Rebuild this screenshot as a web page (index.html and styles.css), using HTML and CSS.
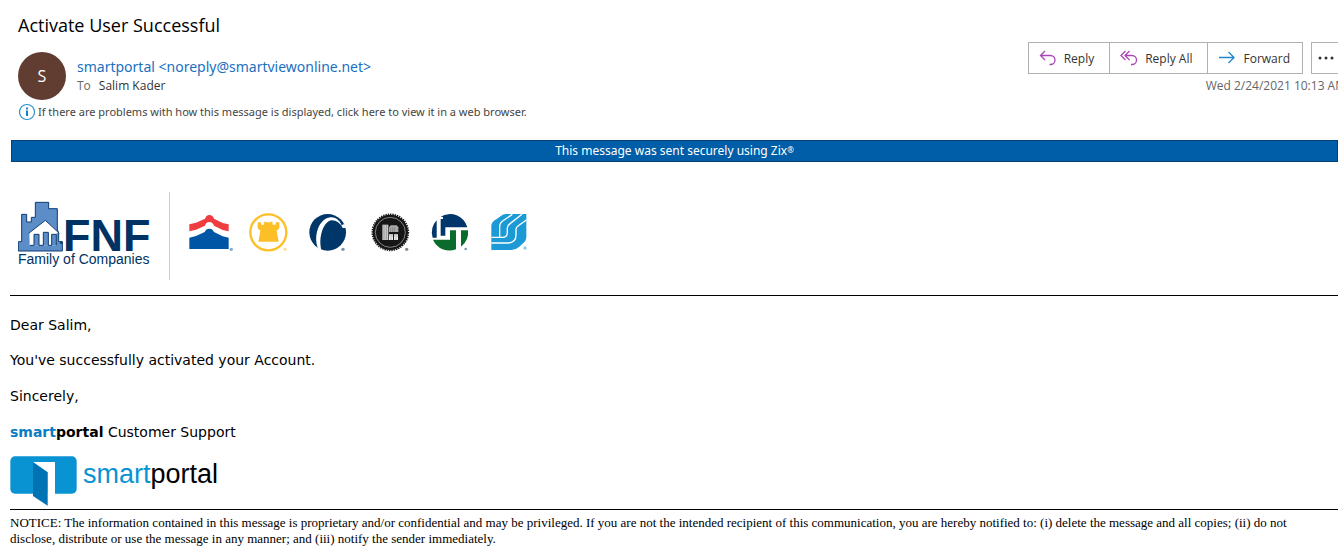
FILE: index.html
```html
<!DOCTYPE html>
<html lang="en">
<head>
    <meta charset="UTF-8">
    <meta name="viewport" content="width=device-width, initial-scale=1.0">
    <title>Activate User Successful</title>
    <link rel="stylesheet" href="styles.css">
</head>
<body>
    <header class="mail-header">
        <h1>Activate User Successful</h1>
        <div class="header-row">
            <div class="avatar">S</div>
            <div class="people">
                <div class="sender">smartportal &lt;noreply@smartviewonline.net&gt;</div>
                <div class="recipient"><span>To</span>Salim Kader</div>
            </div>
            <div class="header-side">
                <div class="actions">
                    <div class="button-group">
                        <button type="button">
                            <svg class="purple" width="18" height="18" viewBox="0 0 18 18"><path d="M6 2L1.500 6.500L6 11M1.500 6.500H11.500A4.500 4.500 0 0 1 11.500 15.500H10.500"/></svg>
                            Reply
                        </button>
                        <button type="button">
                            <svg class="purple" width="18" height="18" viewBox="0 0 18 18"><path d="M5.500 2L1 6.500L5.500 11M9.500 2L5 6.500L9.500 11M5 6.500H12A4.500 4.500 0 0 1 12 15.500H11"/></svg>
                            Reply All
                        </button>
                        <button type="button">
                            <svg class="blue" width="18" height="18" viewBox="0 0 18 18"><path d="M1 8.500H16M10.500 3L16 8.500L10.500 14"/></svg>
                            Forward
                        </button>
                    </div>
                    <button type="button" class="more" aria-label="More actions">
                        <svg width="18" height="4" viewBox="0 0 18 4"><circle cx="3" cy="2" r="1.500"/><circle cx="9" cy="2" r="1.500"/><circle cx="15" cy="2" r="1.500"/></svg>
                    </button>
                </div>
                <div class="date">Wed 2/24/2021 10:13 AM</div>
            </div>
        </div>
        <div class="info-bar">
            <svg width="18" height="18" viewBox="0 0 18 18"><circle cx="9" cy="9" r="7.500" fill="none" stroke="#2b8fcf" stroke-width="1.200"/><path d="M8 4.500h2v2H8zM8 7.500h2V13H8z" fill="#1b7fc4"/></svg>
            If there are problems with how this message is displayed, click here to view it in a web browser.
        </div>
    </header>

    <main class="mail-body">
        <div class="zix-banner">This message was sent securely using Zix<sup>®</sup></div>

        <div class="logos">
            <div class="fnf">
                <svg width="134" height="68" viewBox="54 60 402 204">
                    <path d="M55 213V185H65V103H80V126H94V112H106V67H146V86H172V147L176 160V185H187V213Z" fill="#5c8dc6" stroke="#0d3d75" stroke-width="3"/>
                    <path d="M88 158L136 121L177 158H170V196H89Z" fill="#fff"/>
                    <path d="M86 160L136 121L178 160" fill="none" stroke="#0d3d75" stroke-width="3"/>
                    <path d="M90 196H102V163H117V196H130V157H145V196H155V163H169V196" fill="#5c8dc6" stroke="#0d3d75" stroke-width="3"/>
                    <circle cx="184" cy="188" r="4" fill="#0d3d75"/>
                    <text class="fnf-name" x="189" y="212">FNF</text>
                    <text class="fnf-family" x="54" y="251">Family of Companies</text>
                </svg>
            </div>
            <div class="brands">
                <svg width="48" height="40" viewBox="24 36 144 120">
                    <path d="M28 73L48 68L75 56Q78 46 88 45Q99 46 102 56L128 69L146 73V94L128 90L102 77Q98 66 88 66Q78 66 75 77L48 89L28 94Z" fill="#ef3e42"/>
                    <path d="M28 113L48 108L74 96Q78 86 88 86Q98 86 102 96L128 109L146 113V147H28Z" fill="#0055a5"/>
                    <circle cx="154" cy="148" r="5" fill="#7fa9d0"/>
                </svg>
                <svg width="48" height="40" viewBox="204 36 144 120">
                    <circle cx="265" cy="97" r="54" fill="none" stroke="#fdbf27" stroke-width="7"/>
                    <path d="M233 67H243V74H253V67H277V74H287V67H298V85L290 92L296 125H235L241 92L233 85Z" fill="#fdbf27"/>
                    <path d="M253 65H259V75H271V65H277V75H253Z" fill="#fdbf27"/>
                    <circle cx="315" cy="148" r="5" fill="#fddf93"/>
                </svg>
                <svg width="48" height="40" viewBox="24 36 144 120">
                    <circle cx="83" cy="97" r="55" fill="#003768"/>
                    <path d="M54 145C40 111 54 57 91 52Q114 50 125 76L132 72L140 83L128 84Q116 60 94 61C68 66 54 118 65 152Z" fill="#fff"/>
                    <circle cx="129" cy="148" r="5" fill="#7694b0"/>
                </svg>
                <svg width="48" height="40" viewBox="204 36 144 120">
                    <circle cx="271" cy="97" r="53" fill="#161616"/>
                    <circle cx="271" cy="97" r="54" fill="none" stroke="#161616" stroke-width="5" stroke-dasharray="4 3"/>
                    <circle cx="271" cy="97" r="45" fill="none" stroke="#bbb" stroke-width="2"/>
                    <path d="M247 74H265V120H247Z" fill="#c9c9c9"/>
                    <path d="M267 82L272 76H290L295 82V96H267Z" fill="#aaa"/>
                    <path d="M267 103H279V120H267ZM282 103H294V120H282Z" fill="#eee"/>
                    <path d="M252 75V119M259 75V119M272 82V96M278 82V96M284 82V96M273 112V120M288 112V120M267 108H294" fill="none" stroke="#444" stroke-width="1"/>
                    <circle cx="320" cy="148" r="5" fill="#888"/>
                </svg>
                <svg width="48" height="40" viewBox="24 36 144 120">
                    <path d="M62 50A54 54 0 0 1 142 82H76V107H62V57H69V51Z" fill="#00366b"/>
                    <path d="M50 61V113H38A54 54 0 0 1 50 61Z" fill="#00366b"/>
                    <path d="M39 119H90V91H108V148A54 54 0 0 1 39 119Z" fill="#0a6b2c"/>
                    <path d="M123 91H144A54 54 0 0 1 123 140Z" fill="#0a6b2c"/>
                    <circle cx="137" cy="147" r="4" fill="#8297ab"/>
                </svg>
                <svg width="48" height="40" viewBox="204 36 144 120">
                    <path d="M214 75Q217 64 229 58L247 45Q251 42 260 42H319V111Q319 122 309 130L297 141Q287 150 274 150H214Z" fill="#1c9ad6"/>
                    <path d="M277 43L248 63Q239 69 239 80V112M214 112H246Q262 112 262 98V84Q262 76 271 70L306 43M214 129H263Q288 129 288 105V88Q288 82 294 78L319 60" fill="none" stroke="#fff" stroke-width="4"/>
                    <circle cx="315" cy="144" r="5" fill="#8ccbea"/>
                </svg>
            </div>
        </div>

        <div class="message">
            <p>Dear Salim,</p>
            <p>You've successfully activated your Account.</p>
            <p>Sincerely,</p>
            <p><b><span class="smart">smart</span>portal</b> Customer Support</p>
            <div class="portal-logo">
                <svg width="67" height="50" viewBox="30 138 201 150">
                    <rect x="31" y="139" width="199" height="112" rx="14" fill="#0a93d3"/>
                    <path d="M99 156H165V252H142V187Z" fill="#fff"/>
                    <path d="M99 157L143 187V287L99 258Z" fill="#0073b5"/>
                </svg>
                <span class="portal-name"><span>smart</span>portal</span>
            </div>
        </div>

        <div class="notice">NOTICE: The information contained in this message is proprietary and/or confidential and may be privileged. If you are not the intended recipient of this communication, you are hereby notified to: (i) delete the message and all copies; (ii) do not disclose, distribute or use the message in any manner; and (iii) notify the sender immediately.</div>
    </main>
</body>
</html>
```
FILE: styles.css
```css
body {
    margin: 0;
    background: #fff;
    color: #000;
    font-family: "Open Sans", "Noto Sans", sans-serif;
    overflow-x: hidden;
}

.mail-header {
    padding: 11px 0 0 18px;
}

h1 {
    margin: 0;
    font-size: 18px;
    line-height: 28px;
    font-weight: 400;
}

.header-row {
    display: flex;
    align-items: flex-start;
    margin-top: 3px;
}

.avatar {
    width: 48px;
    height: 48px;
    margin-top: 10px;
    border-radius: 50%;
    background: #603c31;
    color: #fff;
    font-size: 16px;
    line-height: 48px;
    text-align: center;
}

.people {
    flex: 1;
    margin: 14px 0 0 11px;
}

.sender {
    color: #1a70bf;
    font-family: "Noto Sans", sans-serif;
    font-size: 14px;
    line-height: 22px;
}

.recipient {
    color: #333;
    font-size: 12px;
    line-height: 16px;
}

.recipient span {
    margin-right: 8px;
    color: #666;
}

/* the toolbar runs past the right edge of the window */
.header-side {
    margin-right: -8px;
}

.actions {
    display: flex;
    justify-content: flex-end;
    gap: 8px;
}

.button-group {
    display: flex;
}

button {
    display: flex;
    align-items: center;
    gap: 7px;
    height: 32px;
    padding: 0 15px 0 10px;
    border: 1px solid #b3b0ad;
    background: #fff;
    color: #333;
    font-family: inherit;
    font-size: 12px;
    cursor: pointer;
}

button:hover {
    background: #f3f2f1;
}

.button-group button + button {
    margin-left: -1px;
}

.button-group button:last-child {
    padding-right: 12px;
}

.more {
    padding: 0 10px 0 5px;
}

.more svg {
    fill: #333;
}

.purple,
.blue {
    fill: none;
    stroke: #a846b5;
    stroke-width: 1.3;
}

.blue {
    stroke: #1e87cc;
}

.date {
    color: #666;
    font-size: 12px;
    line-height: 24px;
    text-align: right;
}

.info-bar {
    display: flex;
    align-items: center;
    gap: 2px;
    height: 18px;
    margin-top: 3px;
    color: #444;
    font-family: "Noto Sans", sans-serif;
    font-size: 11px;
    line-height: 16px;
}

.mail-body {
    padding: 19px 0 0 10px;
}

.zix-banner {
    margin-left: 1px;
    border: 1px solid #063f73;
    background: #005ea8;
    color: #fff;
    font-family: "Noto Sans", sans-serif;
    font-size: 12px;
    line-height: 20px;
    text-align: center;
}

.zix-banner sup {
    font-size: 8px;
    line-height: 0;
    vertical-align: 2px;
}

.logos {
    display: flex;
    padding: 30px 0 15px 8px;
}

.fnf {
    padding: 8px 17px 12px 0;
    border-right: 1px solid #c8ccd0;
}

.fnf svg,
.brands svg {
    display: block;
}

.fnf-name {
    fill: #003263;
    font-family: "Liberation Sans", Arial, sans-serif;
    font-size: 135px;
    font-weight: 700;
}

.fnf-family {
    fill: #003263;
    font-family: "Liberation Sans", Arial, sans-serif;
    font-size: 42px;
}

.brands {
    display: flex;
    gap: 12px;
    padding: 20px 0 0 18px;
}

.message {
    padding-top: 20px;
    border-top: 1px solid #000;
    font-family: "DejaVu Sans", Verdana, sans-serif;
    font-size: 14px;
    line-height: 18px;
}

.message p {
    margin: 0 0 18px;
}

.message p:first-child {
    margin-bottom: 17px;
}

.message .smart {
    color: #0a7cc4;
}

.portal-logo {
    display: flex;
    gap: 6px;
    margin-top: -3px;
    padding-bottom: 3px;
}

.portal-name {
    font-family: "Liberation Sans", Arial, sans-serif;
    font-size: 27px;
    line-height: 36px;
}

.portal-name span {
    color: #0a93d3;
}

.notice {
    padding: 5px 12px 2px 0;
    border-top: 1px solid #000;
    font-family: "Liberation Serif", "Times New Roman", serif;
    font-size: 13px;
    line-height: 16px;
}
```
